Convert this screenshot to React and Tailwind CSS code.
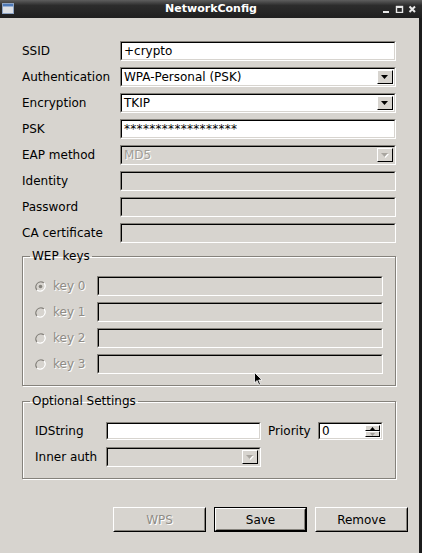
const BG = "bg-[#d7d4cf]";

const Sunken = ({ className = "", white = true, children }) => (
  <div
    className={`border border-t-[#85827c] border-l-[#85827c] border-b-white border-r-white ${className}`}
  >
    <div
      className={`h-full border border-t-black border-l-black border-b-[#d7d4cf] border-r-[#d7d4cf] ${
        white ? "bg-white" : "bg-[#d7d4cf]"
      } flex items-center pl-[2px] overflow-hidden relative`}
    >
      {children}
    </div>
  </div>
);

const Arrow = ({ disabled }) => (
  <svg width="8" height="5" viewBox="0 0 8 5">
    {disabled && <polygon points="1,1 8,1 4.5,5" fill="#ffffff" />}
    <polygon points="0,0 7,0 3.5,4" fill={disabled ? "#a8a59f" : "#000"} />
  </svg>
);

const ArrowButton = ({ disabled }) => (
  <div
    className={`absolute right-[1px] top-[1px] bottom-[1px] w-[16px] ${BG} border border-t-white border-l-white border-b-black border-r-black flex items-center justify-center`}
  >
    <Arrow disabled={disabled} />
  </div>
);

const Combo = ({ value, disabled, className = "" }) => (
  <Sunken white={!disabled} className={className}>
    <span className={disabled ? "text-[#a09d97] [text-shadow:1px_1px_0_#fff]" : "text-black"}>
      {value}
    </span>
    <ArrowButton disabled={disabled} />
  </Sunken>
);

const Row = ({ label, children }) => (
  <div className="flex items-center h-[20px]">
    <div className="w-[98px] shrink-0">{label}</div>
    {children}
  </div>
);

const Radio = ({ checked }) => (
  <svg width="11" height="11" viewBox="0 0 11 11">
    <path d="M9 2 A5 5 0 0 0 2 9" stroke="#85827c" strokeWidth="1.3" fill="none" />
    <path d="M9 2 A5 5 0 0 1 2 9" stroke="#ffffff" strokeWidth="1.3" fill="none" />
    <circle cx="5.5" cy="5.5" r="3.8" fill="#d7d4cf" />
    {checked && <circle cx="5.5" cy="5.5" r="1.8" fill="#85827c" />}
  </svg>
);

const GroupBox = ({ title, className = "", children }) => (
  <fieldset
    className={`border border-[#85827c] shadow-[inset_1px_1px_0_#fff,1px_1px_0_#fff] ${className}`}
  >
    <legend className="ml-[-5px] px-[2px] leading-[14px]">{title}</legend>
    {children}
  </fieldset>
);

const Button = ({ children, disabled, isDefault }) => (
  <div className={`w-[93px] h-[25px] ${isDefault ? "border border-black" : ""}`}>
    <div className="h-full border border-t-white border-l-white border-b-black border-r-black">
      <div
        className={`h-full border border-t-[#d7d4cf] border-l-[#d7d4cf] border-b-[#85827c] border-r-[#85827c] flex items-center justify-center ${
          disabled ? "text-[#8f8c86] [text-shadow:1px_1px_0_#fff]" : "text-black"
        }`}
      >
        {children}
      </div>
    </div>
  </div>
);

export default function App() {
  const keys = [0, 1, 2, 3];
  return (
    <div
      className="w-[422px] h-[553px] flex flex-col overflow-hidden text-[12px] text-black"
      style={{ fontFamily: '"DejaVu Sans", sans-serif' }}
    >
      {/* title bar */}
      <div className="h-[18px] shrink-0 flex items-center relative bg-[linear-gradient(#5e5e5e,#2c2c2c_30%,#1f1f1f)]">
        <svg className="absolute left-[2px] top-[3px]" width="12" height="11" viewBox="0 0 12 11">
          <rect x="0.5" y="0.5" width="11" height="10" fill="#e6e8ec" stroke="#8ea4c4" />
          <rect x="1" y="1" width="10" height="2.5" fill="#4d79b8" />
          <rect x="1" y="4" width="10" height="6" fill="#dde0e5" />
        </svg>
        <div className="flex-1 text-center text-white font-bold text-[11px] leading-[18px]">
          NetworkConfig
        </div>
        <svg className="absolute right-[6px] top-[5px]" width="33" height="8" viewBox="0 0 33 8">
          <rect x="0" y="6" width="6" height="2" fill="#e8e8e8" />
          <rect x="13.5" y="1.5" width="6" height="6" fill="none" stroke="#e8e8e8" strokeWidth="1.4" />
          <rect x="13" y="1" width="7" height="2" fill="#e8e8e8" />
          <path d="M26.5 1.5 L32 7 M32 1.5 L26.5 7" stroke="#e8e8e8" strokeWidth="2" />
        </svg>
      </div>

      {/* body */}
      <div className={`flex-1 ${BG} border-r-[3px] border-r-[#1c1c1c] relative`}>
        <div className="pl-[22px] pr-[23px] pt-[23px] flex flex-col">
          <div className="flex flex-col gap-[6px]">
            <Row label="SSID">
              <Sunken className="w-[276px] h-[20px]">+crypto</Sunken>
            </Row>
            <Row label="Authentication">
              <Combo value="WPA-Personal (PSK)" className="w-[276px] h-[20px]" />
            </Row>
            <Row label="Encryption">
              <Combo value="TKIP" className="w-[276px] h-[20px]" />
            </Row>
            <Row label="PSK">
              <Sunken className="w-[276px] h-[20px]">
                <span className="text-[12px] tracking-[0.3px]">******************</span>
              </Sunken>
            </Row>
            <Row label="EAP method">
              <Combo value="MD5" disabled className="w-[276px] h-[20px]" />
            </Row>
            <Row label="Identity">
              <Sunken white={false} className="w-[276px] h-[20px]" />
            </Row>
            <Row label="Password">
              <Sunken white={false} className="w-[276px] h-[20px]" />
            </Row>
            <Row label="CA certificate">
              <Sunken white={false} className="w-[276px] h-[20px]" />
            </Row>
          </div>

          <GroupBox title="WEP keys" className="mt-[6px] w-[374px] pl-[12px] pr-[12px] pt-[13px] pb-[11px]">
            <div className="flex flex-col gap-[6px]">
              {keys.map((k) => (
                <div key={k} className="flex items-center h-[20px]">
                  <div className="w-[18px] flex items-center">
                    <Radio checked={k === 0} />
                  </div>
                  <div className="w-[44px] text-[#8f8c86] [text-shadow:1px_1px_0_#fff]">key {k}</div>
                  <Sunken white={false} className="w-[286px] h-[20px]" />
                </div>
              ))}
            </div>
          </GroupBox>

          <GroupBox title="Optional Settings" className="mt-[8px] w-[374px] pl-[12px] pr-[12px] pt-[13px] pb-[11px]">
            <div className="flex flex-col gap-[6px]">
              <div className="flex items-center h-[20px]">
                <div className="w-[71px]">IDString</div>
                <Sunken className="w-[155px] h-[18px]" />
                <div className="ml-[7px] w-[50px]">Priority</div>
                <Sunken className="w-[65px] h-[18px]">
                  0
                  <div className="absolute right-[1px] top-[1px] bottom-[1px] w-[15px] flex flex-col">
                    <div className={`flex-1 ${BG} border border-t-white border-l-white border-b-black border-r-black flex items-center justify-center`}>
                      <svg width="5" height="3" viewBox="0 0 5 3">
                        <polygon points="0,3 5,3 2.5,0" fill="#000" />
                      </svg>
                    </div>
                    <div className={`flex-1 ${BG} border border-t-white border-l-white border-b-black border-r-black flex items-center justify-center`}>
                      <svg width="5" height="3" viewBox="0 0 5 3">
                        <polygon points="0,0 5,0 2.5,3" fill="#a09d97" />
                      </svg>
                    </div>
                  </div>
                </Sunken>
              </div>
              <div className="flex items-center h-[20px]">
                <div className="w-[71px]">Inner auth</div>
                <Combo value="" disabled className="w-[155px] h-[20px]" />
              </div>
            </div>
          </GroupBox>
        </div>

        <div className="flex justify-end gap-[8px] pr-[11px] mt-[28px]">
          <Button disabled>WPS</Button>
          <Button isDefault>Save</Button>
          <Button>Remove</Button>
        </div>

        {/* mouse pointer */}
        <svg className="absolute left-[254px] top-[354px]" width="9" height="14" viewBox="0 0 9 14">
          <path d="M0.5 0.5 L0.5 11 L3 8.5 L5 13 L6.5 12.3 L4.7 8 L8 8 Z" fill="#000" stroke="#fff" strokeWidth="0.8" />
        </svg>
      </div>
    </div>
  );
}
